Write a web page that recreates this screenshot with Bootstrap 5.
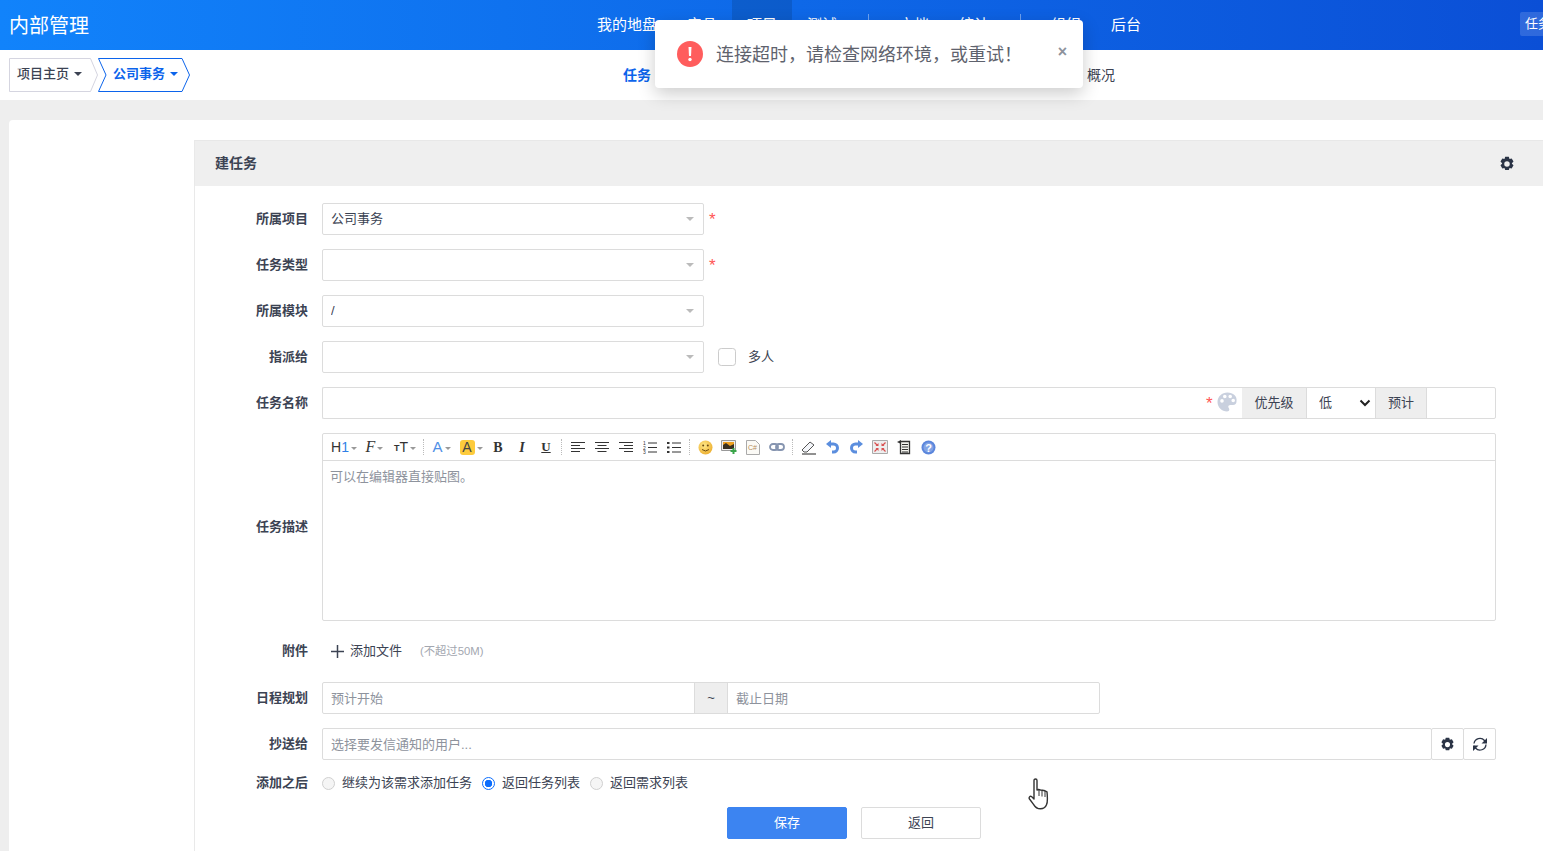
<!DOCTYPE html>
<html lang="zh-CN">
<head>
<meta charset="UTF-8">
<meta name="viewport" content="width=device-width, initial-scale=1.0">
<title>建任务</title>
<link rel="stylesheet" href="https://cdn.jsdelivr.net/npm/bootstrap@5.3.0/dist/css/bootstrap.min.css">
<style>
body{font-family:"Liberation Sans","Noto Sans CJK SC",sans-serif;font-size:13px;color:#3c4353;background:#eee;height:851px;overflow:hidden;position:relative}
a{text-decoration:none}
.top-head{height:50px;background:linear-gradient(90deg,#1183fb,#0b4fd6);color:#fff}
.top-brand{width:582px;padding:1px 0 0 9px;font-size:20px;line-height:50px;flex:none}
.top-link{width:60px;height:50px;line-height:50px;text-align:center;color:#fff;font-size:15px;flex:none}
.top-first{width:90px}
.top-link.on{background:rgba(0,0,0,.12)}
.top-sep{width:1px;height:16px;background:rgba(255,255,255,.4);margin:14px 15px 0 16px;align-self:flex-start;flex:none}
.top-task{width:23px;height:24px;line-height:24px;overflow:hidden;white-space:nowrap;background:rgba(255,255,255,.15);border-radius:2px 0 0 2px;padding-left:5px;font-size:13px;color:#fff;margin-top:12px}
.sub-head{height:50px;background:#fff}
.crumb{position:relative;height:34px;line-height:32px;font-weight:500;white-space:nowrap;color:#3c4353}
.crumb svg{position:absolute;left:0;top:0}
.crumb span{position:relative}
.crumb-a{width:89px;margin-left:9px;padding-left:8px}
.crumb-b{width:92px;margin-left:0;padding-left:15px;color:#0c64eb;font-weight:700}
.tri{display:inline-block;width:0;height:0;border:4px solid transparent;border-top-color:currentColor;border-bottom:0;margin-left:5px;vertical-align:2px}
.sub-task{color:#0c64eb;font-weight:700;font-size:14px;margin-left:433px;width:464px}
.sub-over{color:#3c4353;font-size:14px}
.sheet{margin:20px 0 0 9px;padding:20px 0 0 185px;background:#fff;border-radius:4px 0 0 0;height:731px}
.task-panel{border-left:1px solid #e9e9e9;height:711px}
.panel-top{height:46px;background:#efefef;padding:0 28px 0 20px;border-top:1px solid #e8e8e8;font-weight:700;font-size:14px}
.panel-in{padding:17px 47px 0 17px}
.fm-row{display:flex;align-items:center;margin-bottom:14px}
.fm-lab{width:96px;flex:none;text-align:right;font-weight:700;margin-right:14px}
.field-w{width:382px}
.task-panel .form-control,.task-panel .form-select,.task-panel .input-group-text,.tool-btn{height:32px;border-radius:2px;font-size:13px;border-color:#dcdcdc;padding:0 8px;color:#3c4353}
.task-panel .form-control::placeholder{color:#8e939d}
.task-panel .input-group-text{background:#eee;justify-content:center}
.pick{background-image:url("data:image/svg+xml,%3Csvg xmlns='http://www.w3.org/2000/svg' width='8' height='4'%3E%3Cpath d='M0 0h8L4 4z' fill='%23bbb'/%3E%3C/svg%3E");background-size:8px 4px;background-position:right 9px center}
.req{color:#f55;margin-left:5px;width:10px;font-size:17px;line-height:15px}
.name-wrap{position:relative;flex:1 1 auto;min-width:0}
.name-wrap .form-control{border-top-right-radius:0!important;border-bottom-right-radius:0!important;border-right:0}
.name-star{position:absolute;left:884px;top:9px;color:#f55;font-size:17px;line-height:15px}
.name-pal{position:absolute;left:895px;top:5px}
.pri-sel{width:70px!important;flex:none!important;padding-left:12px!important;border-radius:0!important;background-size:12px 10px;background-position:right 4px center;background-image:url("data:image/svg+xml,%3Csvg xmlns='http://www.w3.org/2000/svg' viewBox='0 0 12 10'%3E%3Cpath d='M1.500 2.500L6 7l4.500-4.500' fill='none' stroke='%23222' stroke-width='2'/%3E%3C/svg%3E")}
.edit-box{flex:1 1 auto;height:188px;border:1px solid #dcdcdc;border-radius:2px}
.edit-bar{height:27px;border-bottom:1px solid #dcdcdc;padding-left:6px}
.te{width:24px;height:26px;display:flex;align-items:center;justify-content:center;flex:none;color:#333}
.te-w30{width:30px}
.te-w31{width:31px}
.te-w29{width:29px}
.te-sep{width:1px;height:16px;border-left:1px dotted #bbb;margin:0 3px;flex:none}
.te-sep-b{margin-right:4px}
.te-car{display:inline-block;width:0;height:0;border:3px solid transparent;border-top-color:#999;border-bottom:0;margin-left:2px;margin-top:2px}
.te-h{font-size:14px}
.te-h b{font-weight:400;color:#2f7fe6}
.te-f{font-family:"Liberation Serif",serif;font-style:italic;font-size:16px}
.te-s{font-size:9px;font-weight:700;margin-top:3px}
.te-t{font-size:14px}
.te-a{font-size:15px;color:#4f8fe6}
.te-y{background:#fdcb3c;border-radius:3px;width:15px;height:15px;line-height:15px;font-size:14px;text-align:center;color:#444}
.te-b{font-family:"Liberation Serif",serif;font-weight:700;font-size:14px}
.te-i{font-family:"Liberation Serif",serif;font-weight:700;font-style:italic;font-size:14px}
.te-u{font-family:"Liberation Serif",serif;font-weight:700;font-size:13px;text-decoration:underline}
.edit-text{padding:6px 7px;color:#8e939d}
.att-row{height:32px}
.att-note{font-size:11.300px;color:#a3a7b0;margin-left:18px}
.att-add{margin-left:9px;margin-right:6px}
.radio-row{height:26px;margin-bottom:11px}
.radio-row .form-check-input,.many-chk{margin:0}
.radio-row .form-check-input{width:13px;height:13px;background-color:#f5f5f5;border-color:#d0d0d0;flex:none}
.radio-row .form-check-input:checked{background:radial-gradient(circle,#0d6efd 3.5px,#fff 4px);border-color:#0d6efd}
.radio-row label{margin:0 10px 0 7px}
.many-chk{width:18px!important;height:18px;border-color:#ccc;border-radius:2px;flex:none;margin-left:14px!important}
.many-lab{margin-left:12px}
.tool-btn{width:33px;background:#fff;border:1px solid #dcdcdc;padding:0;display:flex;align-items:center;justify-content:center;margin-left:-1px;flex:none}
.act-row{justify-content:center;gap:14px}
.act-row .btn{width:120px;height:32px;padding:0;font-size:13px;border-radius:2px;line-height:30px}
.btn-keep{background:#3c84f1;border-color:#3c84f1;color:#fff}
.btn-back{background:#fff;border-color:#dcdcdc;color:#3c4353}
.alert-pop{position:absolute;left:655px;top:20px;width:428px;height:68px;background:#fff;border-radius:4px;box-shadow:0 6px 18px rgba(0,0,0,.2);padding:0 16px 0 22px;z-index:5}
.alert-txt{font-size:18px;color:#5e626d;margin:2px 0 0 13px;flex:1 1 auto;line-height:26px}
.alert-x{font-size:16px;font-weight:700;color:#8d929c;line-height:1;margin-top:-4px}
.hand-cur{position:absolute;left:1028px;top:778px;z-index:6}
</style>
</head>
<body>
<svg width="0" height="0" class="d-none">
  <symbol id="gear" viewBox="0 0 14 14">
    <path fill-rule="evenodd" fill="#2b3446" d="M5.400.7h3.200l.6 1.900 1.900-.5 1.600 2.800-1.400 1.400 0 .4 1.400 1.400-1.600 2.800-1.900-.5-.6 1.900H5.400l-.6-1.900-1.900.5L1.300 8.100l1.400-1.400V6.300L1.300 4.900l1.600-2.800 1.900.5zM7 4.700a2.400 2.400 0 1 0 0 4.800 2.400 2.400 0 0 0 0-4.800z"/>
  </symbol>
</svg>

<header class="top-head d-flex align-items-start overflow-hidden">
  <div class="top-brand">内部管理</div>
  <a class="top-link top-first" href="#">我的地盘</a>
  <a class="top-link" href="#">产品</a>
  <a class="top-link on" href="#">项目</a>
  <a class="top-link" href="#">测试</a>
  <span class="top-sep"></span>
  <a class="top-link" href="#">文档</a>
  <a class="top-link" href="#">统计</a>
  <span class="top-sep"></span>
  <a class="top-link" href="#">组织</a>
  <a class="top-link" href="#">后台</a>
  <a class="top-task ms-auto" href="#">任务</a>
</header>

<nav class="sub-head d-flex align-items-center">
  <a class="crumb crumb-a" href="#">
    <svg width="90" height="34"><path d="M.5.5H81.500L88.500 17l-7 16.500H.5z" fill="#fff" stroke="#d5d5e0"/></svg>
    <span>项目主页<i class="tri"></i></span>
  </a>
  <a class="crumb crumb-b" href="#">
    <svg width="93" height="34"><path d="M.5.5H84l7.500 16.500L84 33.500H.5L8 17z" fill="#fff" stroke="#0c64eb"/></svg>
    <span>公司事务<i class="tri"></i></span>
  </a>
  <a class="sub-task" href="#">任务</a>
  <a class="sub-over" href="#">概况</a>
</nav>

<main class="sheet">
  <section class="task-panel">
    <div class="panel-top d-flex align-items-center justify-content-between">
      <span>建任务</span>
      <svg width="16" height="16"><use href="#gear"/></svg>
    </div>
    <form class="panel-in">
      <div class="fm-row">
        <label class="fm-lab">所属项目</label>
        <select class="form-select pick field-w"><option>公司事务</option></select>
        <span class="req">*</span>
      </div>
      <div class="fm-row">
        <label class="fm-lab">任务类型</label>
        <select class="form-select pick field-w"><option></option></select>
        <span class="req">*</span>
      </div>
      <div class="fm-row">
        <label class="fm-lab">所属模块</label>
        <select class="form-select pick field-w"><option>/</option></select>
      </div>
      <div class="fm-row">
        <label class="fm-lab">指派给</label>
        <select class="form-select pick field-w"><option></option></select>
        <input class="form-check-input many-chk" type="checkbox" id="many">
        <label class="many-lab" for="many">多人</label>
      </div>
      <div class="fm-row">
        <label class="fm-lab">任务名称</label>
        <div class="input-group flex-nowrap">
          <div class="name-wrap">
            <input class="form-control" type="text">
            <span class="name-star">*</span>
            <svg class="name-pal" width="21" height="20" viewBox="0 0 21 20"><path fill-rule="evenodd" fill="#c9d0de" d="M10.500.5C5 .5.500 4.600.500 10s4.500 9.500 9.500 9.500c1.500 0 2.300-1 2.300-2 0-1.300-1-1.500-1-2.700 0-1 .8-1.800 2-1.800h2.700c2.300 0 3.500-1.500 3.500-3.500C20.500 4 16 .5 10.500.5zM5 10.700a1.800 1.800 0 1 1 0-3.600 1.800 1.800 0 0 1 0 3.600zm2.800-4.400a1.800 1.800 0 1 1 0-3.600 1.800 1.800 0 0 1 0 3.600zm5.400 0a1.800 1.800 0 1 1 0-3.600 1.800 1.800 0 0 1 0 3.600zm3 4a1.800 1.800 0 1 1 0-3.600 1.800 1.800 0 0 1 0 3.600z"/></svg>
          </div>
          <span class="input-group-text" style="width:66px">优先级</span>
          <select class="form-select pri-sel"><option>低</option></select>
          <span class="input-group-text" style="width:52px">预计</span>
          <input class="form-control" type="text" style="width:70px;flex:none">
        </div>
      </div>
      <div class="fm-row">
        <label class="fm-lab">任务描述</label>
        <div class="edit-box d-flex flex-column">
          <div class="edit-bar d-flex align-items-center">
            <span class="te te-w30 te-h">H<b>1</b><i class="te-car"></i></span>
            <span class="te te-w31 te-f">F<i class="te-car"></i></span>
            <span class="te te-w30"><span class="te-s">T</span><span class="te-t">T</span><i class="te-car"></i></span>
            <span class="te-sep"></span>
            <span class="te te-w29 te-a">A<i class="te-car"></i></span>
            <span class="te te-w30"><span class="te-y">A</span><i class="te-car"></i></span>
            <span class="te te-b">B</span>
            <span class="te te-i">I</span>
            <span class="te te-u">U</span>
            <span class="te-sep te-sep-b"></span>
            <span class="te"><svg width="14" height="12" stroke="#333"><path d="M0 1.500h14M0 4.500h9M0 7.500h14M0 10.500h9"/></svg></span>
            <span class="te"><svg width="14" height="12" stroke="#333"><path d="M0 1.500h14M2.500 4.500h9M0 7.500h14M2.500 10.500h9"/></svg></span>
            <span class="te"><svg width="14" height="12" stroke="#333"><path d="M0 1.500h14M5 4.500h9M0 7.500h14M5 10.500h9"/></svg></span>
            <span class="te"><svg width="14" height="13"><path stroke="#333" d="M5 2h9M5 6.500h9M5 11h9"/><g font-size="5" fill="#333"><text x="0" y="4">1</text><text x="0" y="8.500">2</text><text x="0" y="13">3</text></g></svg></span>
            <span class="te"><svg width="14" height="13"><path stroke="#333" d="M5 2h9M5 6.500h9M5 11h9"/><path fill="#333" d="M0 1h2.500v2H0zM0 5.500h2.500v2H0zM0 10h2.500v2H0z"/></svg></span>
            <span class="te-sep"></span>
            <span class="te"><svg width="15" height="15"><defs><radialGradient id="sm" cx=".4" cy=".35" r=".75"><stop offset="0" stop-color="#ffe98a"/><stop offset="1" stop-color="#eba926"/></radialGradient></defs><circle cx="7.500" cy="7.500" r="7" fill="url(#sm)"/><circle cx="5.200" cy="5.500" r="1" fill="#6b4a10"/><circle cx="9.800" cy="5.500" r="1" fill="#6b4a10"/><path d="M4 9.500q3.500 3 7 0" fill="none" stroke="#6b4a10"/></svg></span>
            <span class="te"><svg width="16" height="14"><path fill="#eee" stroke="#999" d="M.5.5h14v10H.5z"/><path fill="#f0a020" d="M2 2h11v7H2z"/><path fill="#3a3020" d="M2 5l3-2 4 3 4-2v5H2z"/><path stroke="#3aa54a" stroke-width="2" d="M12.500 8v6M9.500 11h6"/></svg></span>
            <span class="te"><svg width="14" height="15"><path fill="#fbfaf6" stroke="#aaa" d="M.5.5h9l4 4v10H.5z"/><text x="2" y="10" font-size="7" fill="#b58d5a">C#</text></svg></span>
            <span class="te"><svg width="16" height="8" fill="none" stroke="#8695b0" stroke-width="1.800"><rect x="1" y="1" width="8" height="6" rx="3"/><rect x="7" y="1" width="8" height="6" rx="3"/></svg></span>
            <span class="te-sep"></span>
            <span class="te"><svg width="15" height="15"><path fill="#f4f6fa" stroke="#555" d="M1 10l8-8 4 3-7 7H3z"/><path stroke="#222" d="M1 14h14"/></svg></span>
            <span class="te"><svg width="13" height="14" fill="none"><path stroke="#5b8ede" stroke-width="3" d="M3 4h4.500a3.500 3.500 0 0 1 0 8H6"/><path fill="#5b8ede" d="M5 0v8L0 4z"/></svg></span>
            <span class="te"><svg width="13" height="14" fill="none"><path stroke="#5b8ede" stroke-width="3" d="M10 4H5.500a3.500 3.500 0 0 0 0 8H7"/><path fill="#5b8ede" d="M8 0v8l5-4z"/></svg></span>
            <span class="te"><svg width="16" height="14"><path fill="#eee" stroke="#aaa" d="M.5.500h15v13H.5z"/><path fill="none" stroke="#d85050" stroke-width="1.200" d="M2.500 2.500l3 3M13.500 2.500l-3 3M2.500 11.500l3-3M13.500 11.500l-3-3"/><path fill="#d85050" d="M3.500 6h3V3zM12.500 6h-3V3zM3.500 8h3v3zM12.500 8h-3v3z"/></svg></span>
            <span class="te"><svg width="14" height="15"><path fill="#f5f5f0" stroke="#333" stroke-width="1.300" d="M3.500 1.500h9v12h-9z"/><path fill="#333" d="M0 2l4-2v4z"/><path stroke="#333" d="M5 4.500h6M5 7h6M5 9.500h6M5 12h6"/></svg></span>
            <span class="te"><svg width="15" height="15"><circle cx="7.500" cy="7.500" r="7" fill="#5b86dc"/><circle cx="7.500" cy="7.500" r="5" fill="#fff" opacity=".25"/><text x="7.500" y="11.500" text-anchor="middle" font-size="11" font-weight="700" fill="#fff">?</text></svg></span>
          </div>
          <div class="edit-text">可以在编辑器直接贴图。</div>
        </div>
      </div>
      <div class="fm-row att-row" style="margin-bottom:15px">
        <label class="fm-lab">附件</label>
        <svg class="att-add" width="13" height="13"><path stroke="#3c4353" stroke-width="1.500" d="M6.500 0v13M0 6.500h13"/></svg>
        <span>添加文件</span>
        <span class="att-note">(不超过50M)</span>
      </div>
      <div class="fm-row">
        <label class="fm-lab">日程规划</label>
        <div class="input-group flex-nowrap" style="width:778px">
          <input class="form-control" type="text" placeholder="预计开始">
          <span class="input-group-text" style="width:34px">~</span>
          <input class="form-control" type="text" placeholder="截止日期">
        </div>
      </div>
      <div class="fm-row" style="margin-bottom:10px">
        <label class="fm-lab">抄送给</label>
        <input class="form-control flex-fill" style="width:auto;min-width:0" type="text" placeholder="选择要发信通知的用户...">
        <button class="tool-btn" type="button"><svg width="15" height="15"><use href="#gear"/></svg></button>
        <button class="tool-btn" type="button"><svg width="16" height="15" fill="none" stroke="#2b3446" stroke-width="1.300"><path d="M2 6.500a6 6 0 0 1 10.500-3l1.500 2"/><path d="M14 7.500a6 6 0 0 1-10.500 3.500L2 9"/><path fill="#2b3446" stroke="none" d="M15 1v5.500H9.500zM1 14V8.500h5.500z"/></svg></button>
      </div>
      <div class="fm-row radio-row">
        <label class="fm-lab" style="margin:0 14px 0 0">添加之后</label>
        <input class="form-check-input" type="radio" name="after" id="r1">
        <label for="r1">继续为该需求添加任务</label>
        <input class="form-check-input" type="radio" name="after" id="r2" checked>
        <label for="r2">返回任务列表</label>
        <input class="form-check-input" type="radio" name="after" id="r3">
        <label for="r3">返回需求列表</label>
      </div>
      <div class="fm-row act-row">
        <button class="btn btn-keep" type="button">保存</button>
        <button class="btn btn-back" type="button">返回</button>
      </div>
    </form>
  </section>
</main>

<div class="alert-pop d-flex align-items-center">
  <svg width="26" height="26" class="flex-shrink-0"><circle cx="13" cy="13" r="13" fill="#ff5d5d"/><path d="M11.500 6h3l-.5 9h-2z" fill="#fff"/><circle cx="13" cy="18.500" r="1.700" fill="#fff"/></svg>
  <span class="alert-txt">连接超时，请检查网络环境，或重试！</span>
  <span class="alert-x">×</span>
</div>

<svg class="hand-cur" width="24" height="33" viewBox="0 0 24 33"><path fill="#fff" stroke="#333" stroke-width="1.400" stroke-linejoin="round" d="M6 2.500c0-2 3-2 3 0V12l1.500-.5 2 .5 2 .3 2.500.5 2 1c.6 6 .5 11-.5 13-1 2.500-2.500 4-6 4-3.500 0-5-1-7-4.500L1.500 21c-1-1.500.5-3.500 2-2.500L6 21z"/><path stroke="#333" d="M11 12v6M14 12.500v6M17 13v6" fill="none"/></svg>
</body>
</html>
